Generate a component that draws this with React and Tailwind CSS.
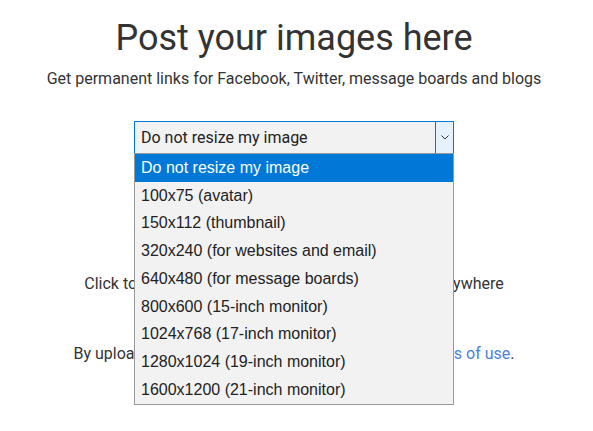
import React from 'react';

const options = [
  'Do not resize my image',
  '100x75 (avatar)',
  '150x112 (thumbnail)',
  '320x240 (for websites and email)',
  '640x480 (for message boards)',
  '800x600 (15-inch monitor)',
  '1024x768 (17-inch monitor)',
  '1280x1024 (19-inch monitor)',
  '1600x1200 (21-inch monitor)',
];

export default function App() {
  return (
    <div className="min-h-screen bg-white text-[#333] font-['Roboto',sans-serif] flex flex-col items-center pt-[16px] pr-[5px]">
      <h1 className="text-[36px] leading-[44px] text-[#333]">Post your images here</h1>
      <p className="text-[16px] leading-[20px] mt-[9px]">
        Get permanent links for Facebook, Twitter, message boards and blogs
      </p>

      <div className="relative mt-[32px] w-[320px]">
        <div className="h-[33px] border border-[#0078d7] bg-[#f2f2f2] flex items-center">
          <span className="flex-1 pl-[6px] text-[16px] text-[#222]">Do not resize my image</span>
          <span className="w-[18px] h-full bg-[#e5f1fb] border-l border-[#0078d7] flex items-center justify-center">
            <svg width="8" height="5" viewBox="0 0 8 5" fill="none">
              <path d="M0.5 0.5 L4 4 L7.5 0.5" stroke="#333" strokeWidth="1" />
            </svg>
          </span>
        </div>
        <ul className="absolute left-0 top-[32px] w-[320px] border border-[#999] bg-[#f2f2f2] font-['Liberation_Sans',Arial,sans-serif] text-[16px] text-[#222]">
          {options.map((o, i) => (
            <li
              key={o}
              className={
                i === 0
                  ? 'h-[27.75px] flex items-center pl-[6px] bg-[#0078d7] text-white'
                  : 'h-[27.75px] flex items-center pl-[6px]'
              }
            >
              {o}
            </li>
          ))}
        </ul>
      </div>

      <p className="text-[16px] leading-[20px] mt-[120px]">
        Click to select the images, or drag and drop them anywhere
      </p>
      <p className="text-[16px] leading-[20px] mt-[50px]">
        By uploading images you agree to our policy and{' '}
        <a className="text-[#4a7fe0]">terms of use</a>.
      </p>
    </div>
  );
}
